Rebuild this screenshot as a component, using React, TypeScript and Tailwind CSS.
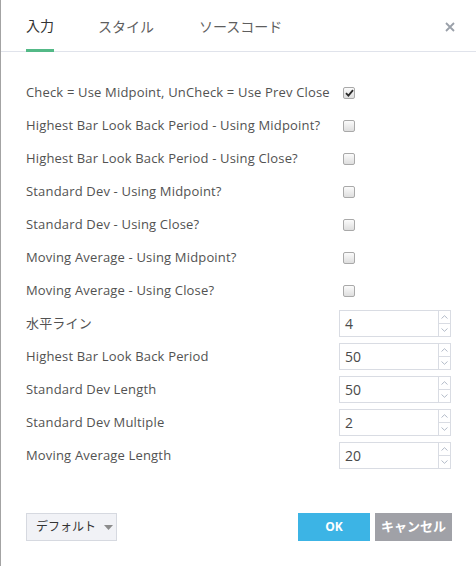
import React from "react";

const checkRows = [
  { label: "Check = Use Midpoint, UnCheck = Use Prev Close", checked: true },
  { label: "Highest Bar Look Back Period - Using Midpoint?", checked: false },
  { label: "Highest Bar Look Back Period - Using Close?", checked: false },
  { label: "Standard Dev - Using Midpoint?", checked: false },
  { label: "Standard Dev - Using Close?", checked: false },
  { label: "Moving Average - Using Midpoint?", checked: false },
  { label: "Moving Average - Using Close?", checked: false },
];

const numberRows = [
  { label: "水平ライン", value: "4" },
  { label: "Highest Bar Look Back Period", value: "50" },
  { label: "Standard Dev Length", value: "50" },
  { label: "Standard Dev Multiple", value: "2" },
  { label: "Moving Average Length", value: "20" },
];

function Checkbox({ checked }: { checked: boolean }) {
  return (
    <span className="ml-[4px] flex h-[12px] w-[12px] items-center justify-center rounded-[2px] border border-[#a9a9a9] bg-gradient-to-b from-[#fbfbfb] to-[#dedede]">
      {checked && (
        <svg width="9" height="8" viewBox="0 0 9 8">
          <path d="M1 4.2 L3.4 6.6 L8 1.2" fill="none" stroke="#2b2b2b" strokeWidth="1.8" />
        </svg>
      )}
    </span>
  );
}

function NumberInput({ value }: { value: string }) {
  return (
    <div className="flex h-[27px] w-[112px] border border-[#d9dce3] bg-white">
      <div className="flex flex-1 items-center pl-[5px] text-[14px] text-[#4a4a4a]">{value}</div>
      <div className="flex w-[12px] flex-col border-l border-[#d9dce3]">
        <div className="flex flex-1 items-center justify-center border-b border-[#d9dce3]">
          <svg width="7" height="4" viewBox="0 0 7 4">
            <path d="M0.5 3.5 L3.5 0.7 L6.5 3.5" fill="none" stroke="#aab3c2" strokeWidth="0.9" />
          </svg>
        </div>
        <div className="flex flex-1 items-center justify-center">
          <svg width="7" height="4" viewBox="0 0 7 4">
            <path d="M0.5 0.5 L3.5 3.3 L6.5 0.5" fill="none" stroke="#aab3c2" strokeWidth="0.9" />
          </svg>
        </div>
      </div>
    </div>
  );
}

export default function App() {
  return (
    <div
      className="flex h-[566px] w-[476px] flex-col border-l border-[#a3a3a3] bg-white text-[#525252]"
      style={{ fontFamily: '"Open Sans", "Noto Sans CJK JP", sans-serif' }}
    >
      <div className="flex h-[52px] items-stretch border-b border-[#e0e3eb] pl-[25px] pr-[20px]">
        <div className="-mb-px flex items-center border-b-[3px] border-[#53b987] pt-[2px] text-[14px] text-[#333]">入力</div>
        <div className="ml-[44px] flex items-center pt-[2px] text-[14px] text-[#5e5e5e]">スタイル</div>
        <div className="ml-[45px] flex items-center pt-[2px] text-[14px] text-[#5e5e5e]">ソースコード</div>
        <div className="ml-auto flex items-center pt-[2px] pr-[1px]">
          <svg width="10" height="10" viewBox="0 0 10 10">
            <path d="M1 1 L9 9 M9 1 L1 9" stroke="#9aa0a9" strokeWidth="1.8" />
          </svg>
        </div>
      </div>

      <div className="flex flex-col pt-[24px] pl-[25px] pr-[25px]">
        {checkRows.map((row) => (
          <div key={row.label} className="grid h-[33px] grid-cols-[313px_1fr] items-center">
            <span className="text-[13px] tracking-[0.17px] whitespace-nowrap">{row.label}</span>
            <Checkbox checked={row.checked} />
          </div>
        ))}
        {numberRows.map((row) => (
          <div key={row.label} className="grid h-[33px] grid-cols-[313px_1fr] items-center">
            <span className="text-[13px] tracking-[0.17px] whitespace-nowrap">{row.label}</span>
            <NumberInput value={row.value} />
          </div>
        ))}
      </div>

      <div className="mt-auto mb-[25px] flex items-center pl-[25px] pr-[24px]">
        <button className="flex h-[28px] w-[91px] items-center gap-[8px] whitespace-nowrap border border-[#d6d9e0] bg-[#f1f2f6] pl-[9px] text-[12px] text-[#333]">
          デフォルト
          <svg width="9" height="5" viewBox="0 0 9 5">
            <path d="M0 0 L9 0 L4.5 5 Z" fill="#8c8c8c" />
          </svg>
        </button>
        <button className="ml-auto h-[28px] w-[72px] bg-[#3cb4e5] text-[12px] font-bold text-white">OK</button>
        <button className="ml-[5px] h-[28px] w-[77px] whitespace-nowrap bg-[#a0a1a7] text-[13px] font-bold text-white">キャンセル</button>
      </div>
    </div>
  );
}
